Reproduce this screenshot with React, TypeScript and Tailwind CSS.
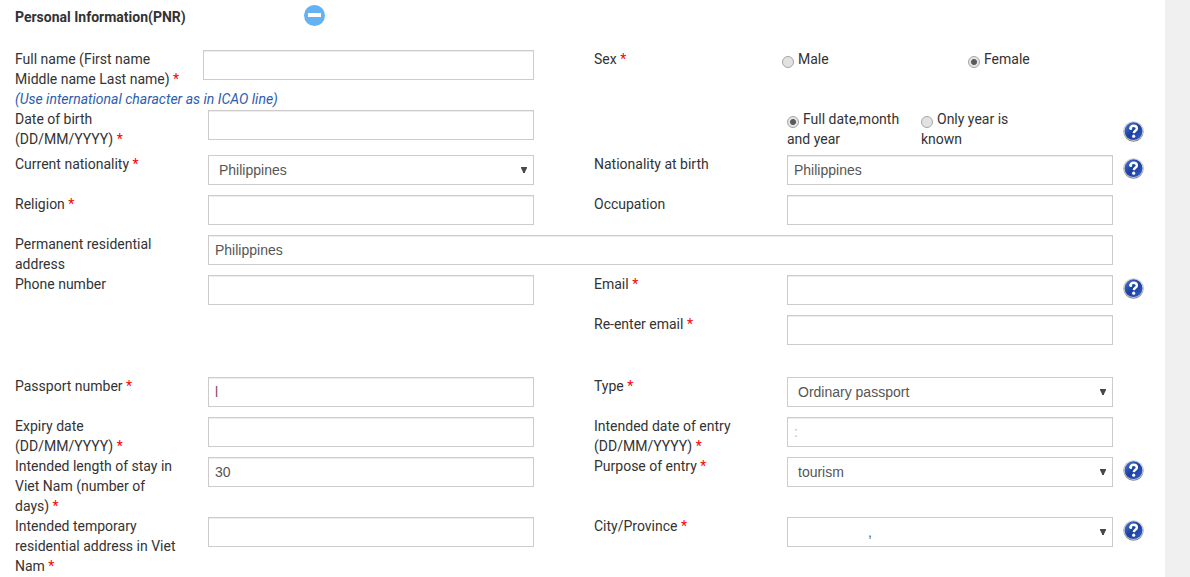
import React from 'react'
import { clsx } from 'clsx'

const ROW = 'grid grid-cols-[193px_1fr_60px_193px_1fr_52px] items-start'
const WIDE_ROW = 'grid grid-cols-[188px_1fr_60px_188px_1fr_52px] items-start'

interface FieldProps {
  id: string
  label: string
  required?: boolean
}

function FieldLabel({ id, label, required }: FieldProps) {
  return (
    <label htmlFor={id} className="max-w-[166px]">
      {label}
      {required && <span className="text-[#ff0000]"> *</span>}
    </label>
  )
}

interface TextInputProps {
  id: string
  value?: string
  type?: string
  className?: string
}

function TextInput({ id, value = '', type = 'text', className }: TextInputProps) {
  return (
    <input
      id={id}
      type={type}
      defaultValue={value}
      className={clsx(
        "mt-px h-[30px] w-full min-w-0 border border-[#cccccc] bg-white px-1.5 font-['Liberation_Sans',sans-serif] text-sm shadow-[inset_0_1px_1px_rgba(0,0,0,0.075)] outline-none",
        className ?? 'text-[#555555]'
      )}
    />
  )
}

interface SelectInputProps {
  id: string
  options: string[]
  className?: string
}

function SelectInput({ id, options, className = 'pl-2.5' }: SelectInputProps) {
  return (
    <div className="relative mt-px">
      <select
        id={id}
        className={clsx(
          "h-[30px] w-full appearance-none border border-[#cccccc] bg-white pr-6 font-['Liberation_Sans',sans-serif] text-sm text-[#555555] outline-none",
          className
        )}
      >
        {options.map((option) => (
          <option key={option}>{option}</option>
        ))}
      </select>
      <svg
        viewBox="0 0 6 6"
        className="pointer-events-none absolute top-3 right-[7px] h-1.5 w-1.5"
        aria-hidden="true"
      >
        <path d="M0 0h6v1L4 5v1H2V5L0 1z" fill="#484848" />
      </svg>
    </div>
  )
}

interface RadioProps {
  name: string
  label: string
  checked?: boolean
}

function Radio({ name, label, checked }: RadioProps) {
  return (
    <label className="pr-5">
      <input
        type="radio"
        name={name}
        defaultChecked={checked}
        className="mr-1 inline-block h-3 w-3 translate-y-1 appearance-none rounded-full border border-[#a6a6a6] bg-[#e2e2e2] checked:bg-[radial-gradient(circle,#5a5a5a_0,#5a5a5a_2.5px,#e4e4e4_3.5px)]"
      />
      {label}
    </label>
  )
}

function HelpButton({ className = 'mt-1' }: { className?: string }) {
  return (
    <button type="button" aria-label="Help" className={clsx('ml-2.5 h-[21px] w-[21px]', className)}>
      <svg viewBox="0 0 21 21" className="block h-full w-full">
        <defs>
          <linearGradient id="help-ring" x1="0" y1="0" x2="0" y2="1">
            <stop offset="0" stopColor="#c9ccd2" />
            <stop offset="1" stopColor="#808080" />
          </linearGradient>
          <linearGradient id="help-fill" x1="0" y1="0" x2="1" y2="1">
            <stop offset="0" stopColor="#4c78d8" />
            <stop offset="0.5" stopColor="#1a3f9e" />
            <stop offset="1" stopColor="#3560cc" />
          </linearGradient>
        </defs>
        <circle cx="10.5" cy="10.5" r="10.2" fill="url(#help-ring)" />
        <circle cx="10.5" cy="10.2" r="9.5" fill="#d8dce4" />
        <circle cx="10.5" cy="10.2" r="8.9" fill="url(#help-fill)" />
        <path
          d="M7.3 7.9c0-2.1 1.4-3.2 3.3-3.2 2 0 3.3 1 3.3 2.7 0 2.3-3 2.3-3.1 4.7"
          fill="none"
          stroke="#ffffff"
          strokeWidth="2.4"
        />
        <circle cx="7.8" cy="7.7" r="1.4" fill="#ffffff" />
        <circle cx="10.7" cy="15.2" r="1.6" fill="#ffffff" />
      </svg>
    </button>
  )
}

export default function App() {
  return (
    <div className="min-h-screen bg-[#f0f0f0] pr-[25px] font-[Roboto,sans-serif] text-sm leading-5 text-[#333333]">
      <form className="min-h-screen bg-white pl-[15px]">
        <div className="flex items-start pt-[5px] pb-[22px]">
          <h2 className="w-[289px] pt-0.5 font-bold">Personal Information(PNR)</h2>
          <button type="button" aria-label="Collapse section" className="h-[21px] w-[21px]">
            <svg viewBox="0 0 21 21" className="block h-full w-full">
              <circle cx="10.5" cy="10.5" r="10.5" fill="#64b1f4" />
              <rect x="4" y="8" width="13" height="4" fill="#ffffff" />
            </svg>
          </button>
        </div>

        <div className={clsx(WIDE_ROW, 'min-h-[60px]')}>
          <FieldLabel id="full-name" label="Full name (First name Middle name Last name)" required />
          <TextInput id="full-name" />
          <span className="col-start-4">
            Sex<span className="text-[#ff0000]"> *</span>
          </span>
          <div className="grid grid-cols-[186px_1fr]">
            <Radio name="sex" label="Male" />
            <Radio name="sex" label="Female" checked />
          </div>
          <p className="col-span-3 col-start-1 text-[#2a5db0] italic">
            (Use international character as in ICAO line)
          </p>
        </div>

        <div className={clsx(ROW, 'min-h-[45px]')}>
          <FieldLabel id="birth-date" label="Date of birth (DD/MM/YYYY)" required />
          <TextInput id="birth-date" />
          <div className="col-start-5 grid grid-cols-[134px_134px]">
            <Radio name="birth-precision" label="Full date,month and year" checked />
            <Radio name="birth-precision" label="Only year is known" />
          </div>
          <HelpButton className="mt-3" />
        </div>

        <div className={clsx(ROW, 'min-h-10')}>
          <FieldLabel id="nationality" label="Current nationality" required />
          <SelectInput id="nationality" options={['Philippines']} />
          <div className="col-start-4 grid">
            <FieldLabel id="birth-nationality" label="Nationality at birth" />
          </div>
          <TextInput id="birth-nationality" value="Philippines" />
          <HelpButton />
        </div>

        <div className={clsx(ROW, 'min-h-10')}>
          <FieldLabel id="religion" label="Religion" required />
          <TextInput id="religion" />
          <div className="col-start-4 grid">
            <FieldLabel id="occupation" label="Occupation" />
          </div>
          <TextInput id="occupation" />
        </div>

        <div className={clsx(ROW, 'min-h-10')}>
          <FieldLabel id="address" label="Permanent residential address" />
          <div className="col-span-4 grid">
            <TextInput id="address" value="Philippines" />
          </div>
        </div>

        <div className={clsx(ROW, 'min-h-10')}>
          <FieldLabel id="phone" label="Phone number" />
          <TextInput id="phone" type="tel" />
          <div className="col-start-4 grid">
            <FieldLabel id="email" label="Email" required />
          </div>
          <TextInput id="email" type="email" />
          <HelpButton />
        </div>

        <div className={clsx(ROW, 'min-h-[62px]')}>
          <div className="col-start-4 grid">
            <FieldLabel id="email-repeat" label="Re-enter email" required />
          </div>
          <TextInput id="email-repeat" type="email" />
        </div>

        <div className={clsx(ROW, 'min-h-10')}>
          <FieldLabel id="passport-number" label="Passport number" required />
          <TextInput id="passport-number" value="l" className="text-[#8a4a6a]" />
          <div className="col-start-4 grid">
            <FieldLabel id="passport-type" label="Type" required />
          </div>
          <SelectInput id="passport-type" options={['Ordinary passport']} />
        </div>

        <div className={clsx(ROW, 'min-h-10')}>
          <FieldLabel id="expiry-date" label="Expiry date (DD/MM/YYYY)" required />
          <TextInput id="expiry-date" />
          <div className="col-start-4 grid">
            <FieldLabel id="entry-date" label="Intended date of entry (DD/MM/YYYY)" required />
          </div>
          <TextInput id="entry-date" value=":" className="text-[#e8b878]" />
        </div>

        <div className={clsx(ROW, 'min-h-[60px]')}>
          <FieldLabel
            id="stay-length"
            label="Intended length of stay in Viet Nam (number of days)"
            required
          />
          <TextInput id="stay-length" value="30" />
          <div className="col-start-4 grid">
            <FieldLabel id="purpose" label="Purpose of entry" required />
          </div>
          <SelectInput id="purpose" options={['tourism']} />
          <HelpButton />
        </div>

        <div className={clsx(ROW, 'min-h-[60px]')}>
          <FieldLabel
            id="temporary-address"
            label="Intended temporary residential address in Viet Nam"
            required
          />
          <TextInput id="temporary-address" />
          <div className="col-start-4 grid">
            <FieldLabel id="city" label="City/Province" required />
          </div>
          <SelectInput id="city" options={[',']} className="pl-20" />
          <HelpButton />
        </div>
      </form>
    </div>
  )
}
